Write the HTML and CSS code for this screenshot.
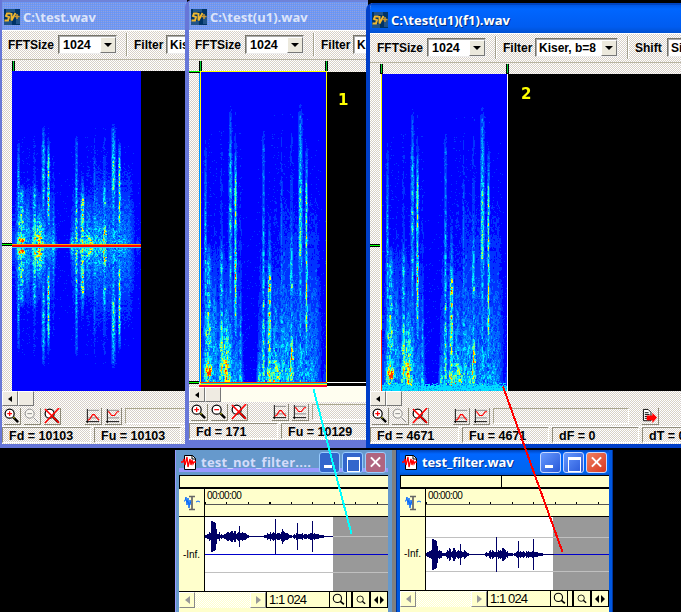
FILE: index.html
```
<!DOCTYPE html>
<html lang="en">
<head>
<meta charset="utf-8">
<title>Spectrum viewer</title>
<link rel="stylesheet" href="styles.css">
</head>
<body>
<svg class="defs" width="0" height="0">
  <symbol id="app" viewBox="0 0 16 16"><path fill="#003366" d="M0 0h16v16H0z"/><path fill="#336699" d="M2 0h9v3H2zM0 12h8v4H0zM12 7h4v8h-4z" opacity=".65"/><path d="M6.500 4.500H3L2 7l3 1-1 3.500H.5M7.500 4v7.500l4-7.500" fill="none" stroke="#f0b830" stroke-width="1.9"/><path d="M13 5v5M10.500 7.500h5" stroke="#cc9933" stroke-width="1.5"/></symbol>
  <symbol id="lens" viewBox="0 0 17 17"><path d="M10 10l5 5" stroke="#000" stroke-width="2.5"/><path d="M10 9l1 2" stroke="#ff0"/><circle cx="6" cy="6" r="4.800" fill="#fff" stroke="#000" stroke-width="1.3"/></symbol>
  <symbol id="plus" viewBox="0 0 17 17"><use href="#lens"/><path d="M3.500 6h5M6 3.500v5" stroke="red" stroke-width="1.3"/></symbol>
  <symbol id="minus" viewBox="0 0 17 17"><use href="#lens"/><path d="M3.500 6h5" stroke="red" stroke-width="1.3"/></symbol>
  <symbol id="minusoff" viewBox="0 0 17 17"><circle cx="6" cy="6" r="4.800" fill="#f8f6f0" stroke="#888"/><path d="M3.500 6h5M10 10l5 5" stroke="#888"/><path d="M11 9.500l5 5" stroke="#fff"/></symbol>
  <symbol id="reset" viewBox="0 0 17 17"><use href="#lens"/><path d="M1 1l15 15M16 0L1 16" stroke="red" stroke-width="1.700"/></symbol>
  <symbol id="hill" viewBox="0 0 17 17"><path d="M2.500 1v15M1 14.500h14" stroke="#000"/><path d="M3 2.500h12M3 10.500h12" stroke="#888"/><path d="M3 13l2-1 3-5h2l3 4 2 2" fill="none" stroke="red" stroke-width="1.2"/></symbol>
  <symbol id="dip" viewBox="0 0 17 17"><path d="M2.500 1v15M1 14.500h14" stroke="#000"/><path d="M3 2.500h12M3 10.500h12" stroke="#888"/><path d="M3 4h1l3 4h3l3-4h2" fill="none" stroke="red" stroke-width="1.2"/></symbol>
  <symbol id="export" viewBox="0 0 17 17"><path d="M1.500 1.500h5l3 3v9h-8z" fill="#fff" stroke="#000"/><path d="M3 5h4M3 7h5M3 9h5M3 11h5" stroke="#000"/><path fill="red" d="M5 8h6V5l5 5-5 6v-3H5z"/></symbol>
  <symbol id="wavdoc" viewBox="0 0 17 17"><path d="M3.500 1.500h8l3 3v11h-11z" fill="#fff" stroke="#000"/><path d="M11 1v4h4" fill="none" stroke="#000"/><path d="M0 8h2l1-3 1 6 2-8 1 10 2-8 1 6 1-5 1 4 1-2h2" fill="none" stroke="red" stroke-width="1.300"/></symbol>
  <symbol id="cursor" viewBox="0 0 16 16"><path d="M0 6h1l1-4 1 8 1-7 1 10 1-8 1 5M12 7l2-1 2 1" fill="none" stroke="#0066ff"/><path d="M5 1.500h6M5 14.500h6M8 2v12" stroke="#666" stroke-width="1.700"/></symbol>
  <symbol id="find" viewBox="0 0 12 12"><circle cx="5" cy="5" r="3.800" fill="none" stroke="#000"/><path d="M7.500 7.500l3.500 3" stroke="#000" stroke-width="1.600"/></symbol>
  <symbol id="both" viewBox="0 0 12 8"><path d="M5 0v8L1 4zM7 0v8l4-4z"/></symbol>
</svg>

<main class="desktop">
  <section class="win w1">
    <header class="title"><svg class="ic16"><use href="#app"/></svg><span>C:\test.wav</span></header>
    <div class="tools">
      <label>FFTSize</label><div class="combo n"><span>1024</span><i></i></div><hr>
      <label>Filter</label><div class="combo k"><span>Kiser, b=8</span><i></i></div>
    </div>
    <canvas id="c1" width="183" height="331"></canvas>
    <div class="scroll"><b class="arrow"></b><b></b></div>
    <div class="icons"><svg><use href="#plus"/></svg><svg><use href="#minusoff"/></svg><svg class="gap"><use href="#reset"/></svg><svg><use href="#hill"/></svg><svg><use href="#dip"/></svg><p></p></div>
    <footer><span>Fd = 10103</span><span>Fu = 10103</span></footer>
  </section>

  <section class="win w2">
    <header class="title"><svg class="ic16"><use href="#app"/></svg><span>C:\test(u1).wav</span></header>
    <div class="tools">
      <label>FFTSize</label><div class="combo n"><span>1024</span><i></i></div><hr>
      <label>Filter</label><div class="combo k"><span>Kiser, b=8</span><i></i></div>
    </div>
    <canvas id="c2" width="177" height="327"></canvas>
    <div class="scroll"><b class="arrow"></b><b></b></div>
    <div class="icons"><svg><use href="#plus"/></svg><svg><use href="#minus"/></svg><svg class="gap"><use href="#reset"/></svg><svg><use href="#hill"/></svg><svg><use href="#dip"/></svg><p></p></div>
    <footer><span>Fd = 171</span><span>Fu = 10129</span></footer>
  </section>

  <section class="win w3">
    <header class="title"><svg class="ic16"><use href="#app"/></svg><span>C:\test(u1)(f1).wav</span></header>
    <div class="tools">
      <label>FFTSize</label><div class="combo n"><span>1024</span><i></i></div><hr>
      <label>Filter</label><div class="combo k"><span>Kiser, b=8</span><i></i></div><hr>
      <label class="shift">Shift</label><div class="combo k"><span>Size</span><i></i></div>
    </div>
    <canvas id="c3" width="311" height="328"></canvas>
    <div class="scroll"><b class="arrow"></b><b></b></div>
    <div class="icons"><svg><use href="#plus"/></svg><svg><use href="#minusoff"/></svg><svg class="gap"><use href="#reset"/></svg><svg><use href="#hill"/></svg><svg><use href="#dip"/></svg><p></p><svg class="exp"><use href="#export"/></svg></div>
    <footer><span>Fd = 4671</span><span>Fu = 4671</span><span>dF = 0</span><span>dT = 0</span></footer>
  </section>

  <section class="wave wa">
    <header><svg class="ic17"><use href="#wavdoc"/></svg><h2>test_not_filter....</h2><button class="min"></button><button class="max"></button><button class="close"></button></header>
    <div class="pane">
      <div class="overview"></div>
      <div class="ruler"><div class="cell"><svg class="ic16"><use href="#cursor"/></svg></div><div class="time"><span>00:00:00</span><div class="ticks"></div></div></div>
      <div class="body"><div class="cell">-Inf.</div><canvas id="c4" width="183" height="74"></canvas></div>
      <div class="bar"><b class="l"></b><div class="track"></div><b class="r"></b><span>1:1 024</span><em><svg class="f1"><use href="#find"/></svg></em><em class="slim"></em><em><svg class="f2"><use href="#find"/></svg></em><em><svg class="f3"><use href="#both"/></svg></em></div>
    </div>
  </section>

  <section class="wave wb">
    <header><svg class="ic17"><use href="#wavdoc"/></svg><h2>test_filter.wav</h2><button class="min"></button><button class="max"></button><button class="close"></button></header>
    <div class="pane">
      <div class="overview"><i></i></div>
      <div class="ruler"><div class="cell"><svg class="ic16"><use href="#cursor"/></svg></div><div class="time"><span>00:00:00</span><div class="ticks"></div></div></div>
      <div class="body"><div class="cell">-Inf.</div><canvas id="c5" width="183" height="73"></canvas></div>
      <div class="bar"><b class="l"></b><div class="track"></div><b class="r"></b><span>1:1 024</span><em><svg class="f1"><use href="#find"/></svg></em><em class="slim"></em><em><svg class="f2"><use href="#find"/></svg></em><em><svg class="f3"><use href="#both"/></svg></em></div>
    </div>
  </section>

  <span class="mark m1">1</span>
  <span class="mark m2">2</span>
  <svg class="pointers" width="681" height="612" shape-rendering="crispEdges"><path d="M313.500 389.500L351.500 534" stroke="#0ff"/><path d="M503 386.500L562.500 552" stroke="#f00"/></svg>
</main>
<script src="app.js"></script>
</body>
</html>
```
FILE: styles.css
```
* { box-sizing: border-box; }
body { margin: 0; background: #000; font-family: "Liberation Sans", sans-serif; color: #000; }
.defs { position: absolute; }
.desktop { position: relative; width: 681px; height: 612px; overflow: hidden; }
.ic16 { width: 16px; height: 16px; flex: none; }
.ic17 { width: 17px; height: 17px; flex: none; }

/* spectrum windows */
.win { position: absolute; display: flex; flex-direction: column; overflow: hidden;
  background: conic-gradient(#fff 25%, #d9d2c4 0 50%, #fff 0 75%, #d6cfcb 0) 0 0 / 2px 2px;
  border: 0 solid #6676d8; }
.w1 { left: 0; top: 0; width: 187px; height: 448px; border-width: 0 0 4px 2px; }
.w2 { left: 185px; top: 0; width: 183px; height: 448px; border-width: 0 0 8px 4px; border-radius: 7px 0 0 0; }
.w3 { left: 366px; top: 3px; width: 320px; height: 445px; border-width: 0 0 4px 4px; border-color: #003fc8; border-radius: 7px 0 0 0; }
.title { flex: none; height: 30px; display: flex; align-items: center; padding: 4px 0 0 2px; gap: 3px;
  background: conic-gradient(#6699ff 25%, #8b9eec 0 50%, #7799dd 0 75%, #6d94ee 0) 0 0 / 2px 2px;
  box-shadow: inset 0 2px #6f83d9; color: #dce4fa; font: bold 13px "Open Sans", sans-serif; letter-spacing: 0; white-space: nowrap; }
.w3 .title { background: linear-gradient(#0050d8, #0066ff 6px, #005cf0 24px, #0050d0); color: #fff; text-shadow: 1px 1px #003080; box-shadow: inset 0 2px #0044c0; }
.tools { flex: none; height: 30px; display: flex; align-items: center; padding: 0 0 1px 6px; border-top: 1px solid #fff; border-bottom: 1px solid #b8b4a0; font-weight: bold; font-size: 12px; white-space: nowrap; }
.w3 .tools { padding-left: 7px; }
.tools label { flex: none; width: 50px; }
.tools hr + label { width: 32px; }
.tools hr { flex: none; width: 2px; height: 23px; margin: 0 6px 0 9px; border: 0; border-left: 1px solid #a5a290; border-right: 1px solid #fff; }
.combo { flex: none; height: 19px; background: #fff; border: 1px solid; border-color: #77756a #eee #eee #77756a; box-shadow: inset 1px 1px #aaa; display: flex; align-items: center; justify-content: space-between; padding-left: 4px; }
.combo.n { width: 59px; font-size: 12.5px; }
.combo.k { width: 83px; padding-left: 3px; }
.combo i { width: 16px; height: 16px; background: #ece9dd; border: 1px solid; border-color: #fff #777 #777 #fff; display: grid; place-items: center; }
.combo i::before { content: ""; border: 4px solid transparent; border-top-color: #000; border-bottom: 0; }
.win canvas { display: block; flex: none; align-self: flex-start; }
.scroll { flex: none; height: 15px; display: flex; }
.scroll b { width: 16px; height: 15px; background: #efebe2; border: 1px solid; border-color: #fff #777 #777 #fff; display: grid; place-items: center; }
.scroll .arrow::before { content: ""; border: 3px solid transparent; border-right: 4px solid #000; border-left: 0; }
.w2 .scroll { background: #fffef0; }
.icons { flex: none; height: 21px; display: flex; align-items: center; padding-left: 2px; gap: 3px; border-bottom: 1px solid #fff; }
.icons svg { flex: none; width: 17px; height: 17px; border: solid #8b8878; border-width: 0 1px 1px 0; }
.icons .gap { margin-right: 21px; }
.icons p { flex: none; width: 136px; height: 16px; margin: 0; border: 1px solid; border-color: #aaa68f #fff #fff #aaa68f; }
.icons .exp { margin-left: 10px; }
footer { flex: none; display: flex; gap: 3px; height: 16px; font: bold 12.5px/16px "Liberation Sans", sans-serif; white-space: nowrap; }
footer span { flex: none; width: 89px; padding-left: 6px; border: 1px solid; border-color: #908c7c #fff #fff #908c7c; line-height: 16px; }
footer span + span { width: 87px; }

/* waveform windows */
.wave { position: absolute; top: 450px; height: 162px; padding: 0 4px; }
.wa { left: 175px; width: 221px; background: #6699cc; border-right: 4px solid #808080; border-left: 1px solid #9999ff; padding: 0 4px 0 3px; }
.wb { left: 396px; width: 217px; background: #0058e0; border-left: 1px solid #003399; border-right: 1px solid #003399; padding: 0 3px; }
.wave header { height: 25px; display: flex; align-items: center; gap: 2px; padding: 0 2px 1px 2px; }
.wave h2 { flex: 1; margin: 0; padding-left: 1px; font: bold 13px "Open Sans", sans-serif; white-space: nowrap; color: #d4dcfa; }
.wa h2 { letter-spacing: .25px; }
.wa header { background: linear-gradient(#6699cc 18px, #9999ff 18px 22px, #6699cc 22px); }
.wb header { background: linear-gradient(#0044bb, #0066ff 4px, #0066ee 22px, #0050cc); }
.wb h2 { color: #fff; text-shadow: 1px 1px #003399; letter-spacing: -.1px; }
.wave button { flex: none; width: 21px; height: 21px; padding: 0; border: 1px solid #c8d8ff; border-radius: 3px; background: linear-gradient(135deg, #6699ff, #2858d8); position: relative; }
.wave .close { background: linear-gradient(135deg, #f08060, #d83820); }
.wa button { border-color: #99ccff; background: #3366cc; }
.wa .close { background: #b06580; }
.min::after { content: ""; position: absolute; left: 4px; bottom: 4px; width: 8px; height: 3px; background: #fff; }
.max::after { content: ""; position: absolute; left: 4px; top: 4px; width: 11px; height: 11px; border: 1px solid #fff; border-top-width: 3px; }
.close::before, .close::after { content: ""; position: absolute; left: 3px; top: 8px; width: 13px; height: 2px; background: #fff; transform: rotate(45deg); }
.close::after { transform: rotate(-45deg); }
.pane { height: 137px; width: 209px; background: #ffffcc; }
.overview { height: 14px; border: 1px solid #000; border-width: 1px 0 2px 1px; display: flex; justify-content: center; }
.overview i { width: 1px; background: #000; margin-right: 7px; }
.ruler { height: 28px; display: flex; border-bottom: 1px solid #000; }
.cell { flex: none; width: 26px; border-right: 1px solid #000; display: grid; place-items: center; font-size: 10px; }
.time { flex: 1; font-size: 10px; line-height: 12px; letter-spacing: -.6px; padding-top: 1px; }
.time span { padding-left: 2px; }
.ticks { height: 3px; border-bottom: 1px solid #555; background: repeating-linear-gradient(90deg, #000 0 1px, transparent 1px 21.500px); }
.body { display: flex; height: 74px; }
.wb .body { height: 73px; }
.body canvas { display: block; }
.bar { height: 17px; display: flex; border-top: 1px solid #000; font-size: 13px; line-height: 15px; letter-spacing: -.9px; }
.bar b { flex: none; width: 16px; border: 1px solid; border-color: #fff #888 #888 #fff; display: grid; place-items: center; }
.bar b::before { content: ""; border: 4px solid transparent; }
.bar .l::before { border-right: 5px solid #999; border-left: 0; }
.bar .r::before { border-left: 5px solid #999; border-right: 0; }
.track { flex: 1; background: conic-gradient(#fff 25%, #ffffcc 0 50%, #fff 0 75%, #ffffcc 0) 0 0 / 2px 2px; }
.bar span { flex: none; width: 63px; border-left: 1px solid #000; border-bottom: 1px solid #000; padding-left: 2px; }
.bar em { flex: none; width: 18px; border: 1px solid #000; border-top: 0; display: grid; place-items: center; }
.bar .slim { width: 5px; border-left: 0; }
.f1 { width: 13px; height: 13px; }
.f2 { width: 10px; height: 10px; }
.f3 { width: 12px; height: 8px; }

/* annotations */
.mark { position: absolute; color: #ff0; font: bold 15px/16px "DejaVu Sans", sans-serif; }
.m1 { left: 338px; top: 92px; }
.m2 { left: 521px; top: 86px; }
.pointers { position: absolute; left: 0; top: 0; fill: none; stroke-width: 2; }
```
FILE: app.js
```
// Streaks: [column, half width, [[row, level], ...]]; rows run 0 (top) to 312 (zero frequency).
const streaks = [
  [4, .9, [[55, 0], [75, 1.3], [110, 2.8], [160, 4.2], [200, 3.6], [312, 4.5]]],
  [7, 2.2, [[60, .3], [170, .8], [190, 4], [240, 4.6], [265, 6.5], [285, 4.5], [298, 8.2], [312, 5]]],
  [13, 2.5, [[60, .2], [180, .9], [240, 3], [312, 4]]],
  [20, 1.3, [[50, .7], [165, 1.3], [190, 4], [245, 4.2], [270, 6], [312, 6]]],
  [25, 2.5, [[190, .6], [240, 3], [277, 6], [312, 6.8]]],
  [29, 1.1, [[20, 0], [50, 2], [90, 3.8], [170, 4.8], [230, 3], [312, 4.6]]],
  [34, .9, [[60, .9], [95, 3.5], [110, 6], [170, 6], [215, 7.2], [250, 5], [270, 2.4], [312, 4]]],
  [39, 1, [[80, .6], [200, 1.4], [312, 4.4]]],
  [58, 1, [[90, .2], [220, .9], [285, 2.4], [302, 5.5], [312, 6.5]]],
  [62, 1, [[55, .6], [75, 2.2], [140, 3.2], [200, 4.2], [312, 5.4]]],
  [68, 1.3, [[140, 1], [190, 3], [208, 6.5], [250, 6.4], [285, 5.2], [305, 7.8], [312, 7]]],
  [74, 3, [[60, .5], [190, .9], [245, 3], [285, 4], [300, 6.5], [312, 6.5]]],
  [80, .8, [[50, .6], [120, 2], [230, 3], [312, 4.5]]],
  [90, 1.3, [[60, 1], [140, 1.7], [190, 4.4], [215, 5.4], [230, 2.8], [260, 4], [285, 7.5], [312, 6.5]]],
  [85, 4, [[110, .4], [230, 2], [295, 4], [312, 5]]],
  [99, 1.4, [[25, 0], [50, 2.8], [95, 4.2], [180, 5.7], [205, 3.4], [312, 4]]],
  [105, .9, [[65, .6], [90, 2.6], [125, 5], [200, 6.2], [240, 6.5], [270, 3.6], [312, 4]]],
  [109, 3, [[90, .4], [200, 1.3], [250, 2.6], [290, 3.5], [312, 4]]],
  [124, 1.2, [[100, .1], [290, .8], [312, 1.5]]]
];
const palette = [[0,0,255],[0,51,255],[0,102,255],[0,160,255],[0,240,255],[100,255,150],[255,255,0],[255,153,0],[255,50,0]];
let seed = 7;
const rnd = () => (seed = (seed * 1664525 + 1013904223) >>> 0) / 4294967296;

function at(points, y) {
  if (y <= points[0][0]) return y < points[0][0] - 30 ? 0 : points[0][1] * .4;
  for (let i = 1; i < points.length; i++) {
    const [y1, v1] = points[i], [y0, v0] = points[i - 1];
    if (y <= y1) return v0 + (v1 - v0) * (y - y0) / (y1 - y0);
  }
  return points[points.length - 1][1];
}
function haze(x, y) {
  const band = (a, b) => x < a ? Math.exp(-((a - x) ** 2) / 8) : x > b ? Math.exp(-((x - b) ** 2) / 24) : 1;
  const t = Math.max(0, y - 20) / 292;
  return band(3, 36) * 3 * t ** 2.6 + band(60, 78) * 2.8 * t ** 2.6 + band(82, 114) * 3 * t ** 1.7 + .35 * t;
}
function makeField() {
  const rows = [];
  const cells = [];
  const prev = [];
  for (let i = 0; i < 110 * 66; i++) cells.push(rnd());
  for (let y = 0; y < 313; y++) {
    const row = [];
    for (let x = 0; x < 130; x++) {
      let e = haze(x, y);
      const spread = 1 + .7 * Math.max(0, y - 240) / 72;
      for (const [c, w, p] of streaks) {
        const d = (x - c) / (w * spread);
        if (Math.abs(d) < 3) e = Math.max(e, at(p, y) * Math.exp(-d * d / 2.5));
      }
      if (prev[x] === undefined || rnd() < .6) prev[x] = rnd();
      const blob = cells[(y / 4 | 0) * 66 + (x / 2 | 0)];
      row.push(e * (.32 + .5 * prev[x] + .5 * blob) + (rnd() < .04 * Math.min(1, y / 60) ? .6 : 0));
    }
    rows.push(row);
  }
  return rows;
}
const field = makeField();

function open(id, x0, y0) {
  const ctx = document.getElementById(id).getContext('2d');
  ctx.translate(-x0, -y0);
  return (color, x, y, w, h) => { ctx.fillStyle = color; ctx.fillRect(x, y, w, h); };
}
function spectrum(r, x0, y0, w, h, shift, row) {
  for (let y = 0; y < h; y++) for (let x = 0; x < w; x++) {
    const fy = Math.max(0, Math.min(312, Math.round(row(y))));
    const v = field[fy][Math.max(0, Math.min(129, x - shift))];
    const c = palette[Math.max(0, Math.min(8, Math.floor(v + .25)))];
    r(`rgb(${c})`, x0 + x, y0 + y, 1, 1);
  }
}
function vmark(r, x) { r('#000', x, 61, 3, 10); r('#0c3', x + 1, 61, 1, 10); }
function hmark(r, x, y, w) { r('#000', x, y, w, 3); r('#0f0', x, y + 1, w, 1); }

let r = open('c1', 2, 60);
r('#000', 12, 71, 173, 320);
spectrum(r, 12, 71, 129, 320, 2, y => 312 - Math.abs(y - 174.500) * 2.3);
r('#f90', 12, 244, 129, 1); r('#f00', 12, 245, 129, 2); r('#3cf', 12, 247, 129, 1);
hmark(r, 2, 243, 10); vmark(r, 12);

r = open('c2', 189, 60);
r('#000', 201, 72, 165, 315);
spectrum(r, 201, 72, 125, 311, 0, y => y);
r('#ff0', 200, 71, 127, 1); r('#ff0', 200, 72, 1, 314); r('#ff0', 326, 72, 1, 314); r('#09f', 199, 72, 1, 310);
r('#f30', 200, 382, 127, 1); r('#0cc', 201, 383, 126, 1); r('#ff0', 200, 384, 127, 1); r('#f03', 199, 385, 128, 2);
r('#fff', 327, 382, 39, 1); r('#fff', 327, 386, 39, 1);
r('#0f0', 189, 71, 11, 1); r('#000', 189, 72, 11, 1);
hmark(r, 189, 381, 10); vmark(r, 199); vmark(r, 325);

r = open('c3', 370, 63);
r('#000', 380, 74, 301, 317);
spectrum(r, 382, 74, 125, 317, 1, y => y - 1);
for (let y = 383; y < 391; y++) for (let x = 382; x < 507; x++) if (rnd() < (y - 381) / 5) r(rnd() < .8 ? '#0df' : '#09f', x, y, 1, 1);
r('#fff', 380, 74, 1, 317); r('#ff0', 381, 74, 1, 317); r('#f30', 381, 330, 1, 61); r('#fff', 507, 74, 1, 317);
hmark(r, 370, 244, 10);
for (const x of [380, 506]) { r('#000', x, 64, 3, 10); r('#0c3', x + 1, 64, 1, 9); }

// Envelope: [column, half height]
const envelope = [[0,2],[3,3],[5,5],[6,15],[9,14],[10,13],[12,5],[15,3],[18,1],[20,3],[23,7],[25,5],[28,7],[31,4],[33,4],[34,10],[35,4],[39,4],[43,1],[46,0],[57,0],[60,2],[64,4],[68,5],[69,4],[70,17],[71,4],[75,4],[77,8],[80,4],[83,2],[87,1],[91,3],[92,13],[93,4],[99,3],[103,3],[106,4],[107,15],[108,3],[112,2],[116,1],[121,0],[128,0]];
function waveform(id, height, mid, lines, white) {
  const r = open(id, 0, 0);
  r('#fff', 0, 0, white, height); r('#999', white, 0, 183 - white, height);
  for (const y of lines) r('#c0c0c0', 0, y, 183, 1);
  r('#0000cc', 0, 37, 183, 1);
  r('#000066', 0, mid, 128, 1);
  for (let x = 0; x < 128; x++) {
    const h = at(envelope, x), j = .4 + .6 * rnd();
    const a = Math.round(h * (h > 9 ? 1 : j));
    r('#000066', x, mid - a, 1, a * 2 + 1);
  }
}
waveform('c4', 74, 19, [19, 55], 128);
waveform('c5', 73, 37, [20, 54], 127);
```
